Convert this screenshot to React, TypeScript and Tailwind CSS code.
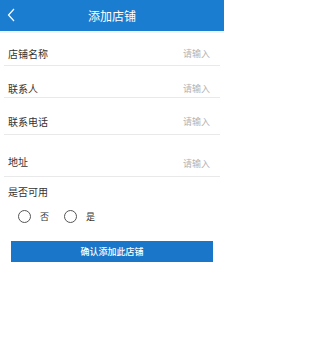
import { useState } from "react";

const fields = [
  { label: "店铺名称", h: "h-[33px]", pt: "pt-[16px]", ph: "pt-[16px]" },
  { label: "联系人", h: "h-[32px]", pt: "pt-[18px]", ph: "pt-[18px]" },
  { label: "联系电话", h: "h-[37px]", pt: "pt-[19px]", ph: "pt-[19px]" },
  { label: "地址", h: "h-[42px]", pt: "pt-[22px]", ph: "pt-[24px]" },
];

export default function App() {
  const [enabled, setEnabled] = useState<"no" | "yes" | null>(null);

  return (
    <div className="w-[224px] h-[347px] bg-white font-['Noto_Sans_CJK_SC','Noto_Sans',sans-serif] overflow-hidden">
      {/* HEADER */}
      <div className="relative h-[31px] bg-[#1b7dcf] flex items-center justify-center">
        <svg
          className="absolute left-[7px] top-[8px]"
          width="8"
          height="14"
          viewBox="0 0 8 14"
          fill="none"
        >
          <path d="M7 1L1.5 7L7 13" stroke="white" strokeWidth="1.2" />
        </svg>
        <span className="text-white text-[12px] leading-none">添加店铺</span>
      </div>
      <div className="h-[2px] bg-[#f3f4f6]" />

      {/* FIELDS */}
      <div className="flex flex-col">
        {fields.map((f) => (
          <div
            key={f.label}
            className={`${f.h} mx-[4px] flex items-start justify-between border-b border-[#e9e9e9] pl-[4px] pr-[10px]`}
          >
            <span className={`${f.pt} text-[10px] text-[#333] leading-none`}>{f.label}</span>
            <span className={`${f.ph} text-[9px] text-[#b3b3b3] leading-none`}>请输入</span>
          </div>
        ))}
      </div>

      {/* ENABLED */}
      <div className="pl-[8px] pt-[10px] text-[10px] text-[#333] leading-none">是否可用</div>
      <div className="flex items-center pl-[18px] pt-[13px] gap-[10px]">
        {[
          ["no", "否"],
          ["yes", "是"],
        ].map(([key, label]) => (
          <button
            key={key}
            onClick={() => setEnabled(key as "no" | "yes")}
            className="flex items-center gap-[9px] mr-[5px]"
          >
            <span className="w-[13px] h-[13px] rounded-full border border-[#555] flex items-center justify-center">
              {enabled === key && <span className="w-[7px] h-[7px] rounded-full bg-[#1b7dcf]" />}
            </span>
            <span className="text-[9px] text-[#333] leading-none">{label}</span>
          </button>
        ))}
      </div>

      {/* SUBMIT */}
      <div className="px-[11px] pt-[18px]">
        <button className="w-full h-[21px] bg-[#1976c9] text-white text-[9px] font-medium leading-none flex items-center justify-center">
          确认添加此店铺
        </button>
      </div>
    </div>
  );
}
